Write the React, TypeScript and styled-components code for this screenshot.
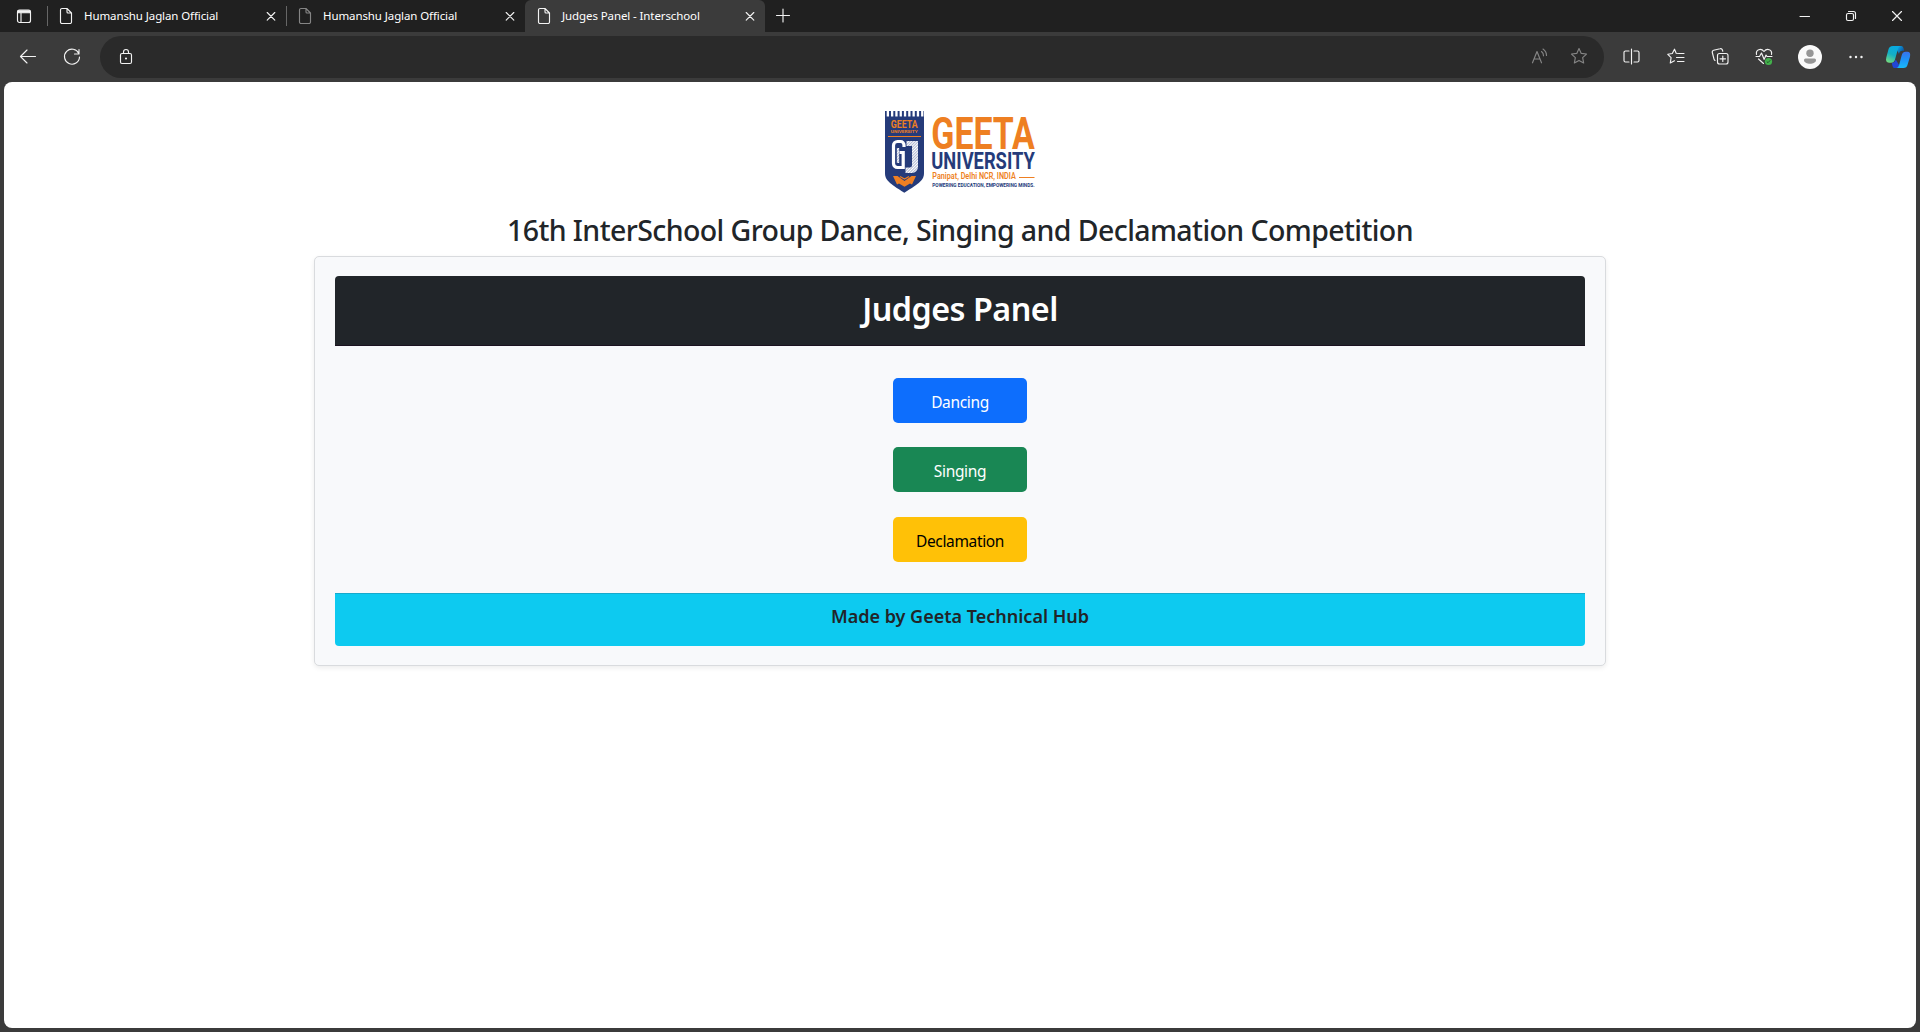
import React from "react";
import styled, { createGlobalStyle, css } from "styled-components";

const GlobalStyle = createGlobalStyle`
  *, *::before, *::after { box-sizing: border-box; }
  html, body, #root { height: 100%; margin: 0; }
  body { background: #3b3b3b; overflow: hidden; font-family: "Noto Sans", "Open Sans", sans-serif; }
`;

const Window = styled.div`
  display: flex;
  flex-direction: column;
  height: 1032px;
  width: 1920px;
  background: #3b3b3b;
`;

const Icon = styled.svg<{ $dim?: boolean; $filled?: boolean }>`
  display: block;
  flex: none;
  fill: none;
  stroke: ${(p) => (p.$filled ? "none" : p.$dim ? "#858585" : "#f2f2f2")};
  stroke-width: 1.15;
  stroke-linecap: round;
  stroke-linejoin: round;
`;

const TabStrip = styled.div`
  display: flex;
  height: 32px;
  background: #202020;
`;

const TabActions = styled.div`
  display: flex;
  align-items: center;
  width: 48px;
  padding-left: 16px;
`;

const TabItem = styled.div<{ $active?: boolean; $divided?: boolean; $width: number }>`
  display: flex;
  align-items: center;
  position: relative;
  width: ${(p) => p.$width}px;
  padding: 0 ${(p) => (p.$width === 239 ? 11 : 10)}px 0 11px;
  ${(p) =>
    p.$active &&
    css`
      padding-left: 12px;
      background: #3b3b3b;
      border-radius: 6px 6px 0 0;
    `}
  ${(p) =>
    p.$divided &&
    css`
      &::before {
        content: "";
        position: absolute;
        left: -1px;
        top: 6px;
        width: 1px;
        height: 20px;
        background: #666;
      }
    `}
`;

const TabTitle = styled.span`
  flex: 1;
  margin-left: 11px;
  color: #fff;
  font-size: 11.5px;
  line-height: 16px;
  letter-spacing: -0.1px;
  white-space: nowrap;
`;

const NewTab = styled.div`
  display: flex;
  align-items: center;
  padding-left: 10px;
`;

const WindowControls = styled.div`
  display: flex;
  align-items: center;
  margin-left: auto;
  gap: 30px;
  padding-right: 15px;
`;

const Toolbar = styled.div`
  display: flex;
  align-items: center;
  height: 50px;
  padding: 0 9px 0 18px;
`;

const NavButtons = styled.div`
  display: flex;
  gap: 24px;
  width: 82px;
`;

const AddressBar = styled.div`
  display: flex;
  align-items: center;
  width: 1504px;
  height: 42px;
  padding: 0 15px 0 16px;
  border-radius: 21px;
  background: #2a2a2a;
`;

const AddressActions = styled.div`
  display: flex;
  gap: 20px;
  margin-left: auto;
`;

const ToolIcons = styled.div`
  display: flex;
  align-items: center;
  flex: 1;
  margin-left: 17px;
`;

const ToolSlot = styled.div<{ $gap: number }>`
  flex: none;
  margin-right: ${(p) => p.$gap}px;
`;

const Page = styled.main`
  display: flex;
  flex-direction: column;
  align-items: center;
  flex: 1;
  margin: 0 4px 4px;
  padding-top: 28px;
  background: #fff;
  border-radius: 8px;
`;

const LogoSvg = styled.svg`
  display: block;
  overflow: visible;
`;

const Heading = styled.h1`
  margin: 16px 0 6px;
  color: #212529;
  font-size: 28.5px;
  font-weight: 500;
  line-height: 40px;
  letter-spacing: -0.59px;
  white-space: nowrap;
`;

const Card = styled.section`
  width: 1292px;
  height: 410px;
  padding: 19px 20px;
  border: 1px solid #d9dbde;
  border-radius: 5px;
  background: #f8f9fb;
  box-shadow: 0 2px 5px rgba(0, 0, 0, 0.075);
`;

const CardHeader = styled.header`
  height: 70px;
  padding-top: 10px;
  border-bottom: 1px solid #1b1220;
  border-radius: 4px 4px 0 0;
  background: #212529;
`;

const PanelTitle = styled.h2`
  margin: 0;
  color: #fff;
  font-size: 32.3px;
  font-weight: 600;
  line-height: 44px;
  letter-spacing: -0.5px;
  text-align: center;
`;

const CardBody = styled.div`
  display: grid;
  grid-template-rows: 45px 45px 45px;
  row-gap: 24.4px;
  justify-content: center;
  height: 247px;
  padding-top: 32px;
`;

const CategoryButton = styled.button<{ $bg: string; $color: string }>`
  width: 134px;
  height: 45px;
  padding: 3px 0 0;
  border: 0;
  border-radius: 5px;
  background: ${(p) => p.$bg};
  color: ${(p) => p.$color};
  font-family: inherit;
  font-size: 15.5px;
  line-height: 24px;
  letter-spacing: -0.35px;
`;

const CardFooter = styled.footer`
  height: 53px;
  padding-top: 9px;
  border-top: 1px solid #17a9cc;
  border-radius: 0 0 4px 4px;
  background: #0dcaf0;
  color: #212529;
  font-size: 18px;
  font-weight: 600;
  line-height: 26px;
  text-align: center;
`;

const FileIcon = ({ dim }: { dim?: boolean }) => (
  <Icon width="14" height="18" viewBox="0 0 14 18" $dim={dim}>
    <path d="M3 1.500h5l4.500 4.500v9a1.500 1.500 0 0 1-1.500 1.500H3A1.500 1.500 0 0 1 1.500 15V3A1.500 1.500 0 0 1 3 1.500zM8 1.500V5a1 1 0 0 0 1 1h3.500" />
  </Icon>
);

const CloseIcon = () => (
  <Icon width="10" height="10" viewBox="0 0 10 10">
    <path d="M1.200 1.500l7.600 7.600M8.800 1.500L1.200 9.100" />
  </Icon>
);

type TabProps = { title: string; width: number; active?: boolean; dim?: boolean; divided?: boolean };

const Tab = ({ title, width, active, dim, divided }: TabProps) => (
  <TabItem $active={active} $divided={divided} $width={width}>
    <FileIcon dim={dim} />
    <TabTitle>{title}</TabTitle>
    <CloseIcon />
  </TabItem>
);

const STAR = "M9 1.500l2.250 4.900 5.250.650-3.850 3.650 1 5.300L9 13.400 4.350 16l1-5.300L1.500 7.050l5.250-.650z";

const CopilotIcon = () => (
  <Icon width="26" height="24" viewBox="0 0 26 24" $filled>
    <defs>
      <linearGradient id="cpTop" x1="0" y1="0" x2="1" y2="0.6">
        <stop offset="0.3" stopColor="#0d9fe0" />
        <stop offset="1" stopColor="#0a4f9c" />
      </linearGradient>
      <linearGradient id="cpLeft" x1="0.6" y1="0" x2="0.2" y2="1">
        <stop offset="0" stopColor="#08a9e2" />
        <stop offset="0.5" stopColor="#14b0c4" />
        <stop offset="1" stopColor="#74dc80" />
      </linearGradient>
      <linearGradient id="cpRight" x1="0" y1="0" x2="0" y2="1">
        <stop offset="0" stopColor="#3a72ea" />
        <stop offset="0.45" stopColor="#1e90f8" />
        <stop offset="1" stopColor="#19baf8" />
      </linearGradient>
    </defs>
    <path d="M10 1h6c2 0 2.600 1.500 3.200 4.800h-2c-1.800 0-2.600 1-3.200 3.200z" fill="url(#cpTop)" />
    <path d="M16 23h-6c-2 0-2.600-1.500-3.200-5.300 2.200 0 3.200-.8 3.900-3.200z" fill="#2246d6" />
    <path d="M8 1h7.500c-1.800.5-2.300 2-3 4.500l-2.200 8c-.8 3-1.800 4.200-4.300 4.200H4C1.300 17.700.5 15.800 1.300 12.500L3.300 5C4.100 2 5.300 1 8 1z" fill="url(#cpLeft)" />
    <path d="M18.300 23h-6.800c1.800-.5 2.300-2 3-4.500l2-7.500c.8-3 1.800-4.200 4.300-4.200h1.400c2.700 0 3.500 1.900 2.700 5.200L22.800 19c-.8 3-2 4-4.500 4z" fill="url(#cpRight)" />
  </Icon>
);

const UniversityLogo = () => (
  <LogoSvg width="152" height="84" viewBox="0 0 152 84">
    <defs>
      <pattern id="hatch" width="2" height="2" patternUnits="userSpaceOnUse" patternTransform="rotate(45)">
        <rect width="2" height="2" fill="#fff" />
        <rect width="0.7" height="2" fill="#8c98bd" />
      </pattern>
    </defs>
    <path
      d="M1 1h1.700v5.500h2.300V1h2v5.500h2.300V1h2v5.500h2.300V1h2v5.500h2.300V1h2v5.500h2.300V1h2v5.500h2.300V1h2v5.500h2.300V1h2v5.500h2.300V1h2v5.500h2.300V1H40v62c0 7-4 10-19.700 19.700C5 73 1 70 1 63z"
      fill="#253b7a"
    />
    <g fontFamily="Roboto, sans-serif" fontWeight="700" fill="#ee7f22">
      <text x="6.800" y="18.300" fontSize="10.700" textLength="26.800" lengthAdjust="spacingAndGlyphs">GEETA</text>
      <text x="6.800" y="22.600" fontSize="4.200" textLength="26.800" lengthAdjust="spacingAndGlyphs">UNIVERSITY</text>
    </g>
    <path d="M4 26.500h33" stroke="#ee7f22" strokeWidth="1" />
    <path d="M20 37V35a3.500 3.500 0 0 0-3.500-3.500H13.500A4 4 0 0 0 9.500 35.500v18a4 4 0 0 0 4 4h5.700V42.500h-3.700" fill="none" stroke="#fff" strokeWidth="3.200" />
    <path d="M22.500 31H34v26a6 6 0 0 1-6 6H21.500v-5.500h4a2.500 2.500 0 0 0 2.500-2.500V36h-5.500z" fill="url(#hatch)" />
    <path d="M14 38v15" stroke="url(#hatch)" strokeWidth="2.400" />
    <path d="M9 66h4.500l7 5 7-5H32L28 74.500l-2-1-5.500 3.300-5.500-3.300-2 1z" fill="#ee7f22" />
    <path d="M16 66.500l4.500 2.500 4.500-2.500" fill="none" stroke="#ee7f22" strokeWidth="1.300" />
    <g fontFamily="Roboto, sans-serif">
      <text x="47.300" y="38.500" fontSize="43.800" fontWeight="700" fill="#ee7f22" textLength="103.500" lengthAdjust="spacingAndGlyphs">GEETA</text>
      <text x="47.300" y="58.700" fontSize="23" fontWeight="700" fill="#253b7a" textLength="103.500" lengthAdjust="spacingAndGlyphs">UNIVERSITY</text>
      <text x="48.300" y="69.200" fontSize="8.600" fontWeight="600" fill="#ee7f22" textLength="83.500" lengthAdjust="spacingAndGlyphs">Panipat, Delhi NCR, INDIA</text>
      <text x="48.300" y="76.500" fontSize="5" fontWeight="700" fill="#253b7a" textLength="102.300" lengthAdjust="spacingAndGlyphs">POWERING EDUCATION, EMPOWERING MINDS.</text>
    </g>
    <path d="M135 67.500H150.500" stroke="#ee7f22" strokeWidth="1" />
  </LogoSvg>
);

const categories = [
  { label: "Dancing", bg: "#0d6efd", color: "#fff" },
  { label: "Singing", bg: "#198754", color: "#fff" },
  { label: "Declamation", bg: "#ffc107", color: "#000" },
];

export default function App() {
  return (
    <Window>
      <GlobalStyle />
      <TabStrip>
        <TabActions>
          <Icon width="16" height="16" viewBox="0 0 16 16">
            <rect x="1.500" y="2" width="13" height="12.500" rx="2" />
            <path d="M2 2.800h12v1.900H2z" fill="#f2f2f2" />
            <path d="M5 5v9.500" />
          </Icon>
        </TabActions>
        <Tab title="Humanshu Jaglan Official" width={239} divided />
        <Tab title="Humanshu Jaglan Official" width={238} dim divided />
        <Tab title="Judges Panel - Interschool" width={240} active />
        <NewTab>
          <Icon width="16" height="16" viewBox="0 0 16 16">
            <path d="M1.500 7.500h13M8 1v13" />
          </Icon>
        </NewTab>
        <WindowControls>
          <Icon width="16" height="16" viewBox="0 0 16 16">
            <path d="M3 8.500h9.500" />
          </Icon>
          <Icon width="16" height="16" viewBox="0 0 16 16">
            <rect x="3.500" y="5.500" width="7" height="7" rx="1.500" />
            <path d="M5.500 3.500h5a2 2 0 0 1 2 2v5" />
          </Icon>
          <Icon width="16" height="16" viewBox="0 0 16 16">
            <path d="M3.500 3.500l9 9M12.500 3.500l-9 9" />
          </Icon>
        </WindowControls>
      </TabStrip>

      <Toolbar>
        <NavButtons>
          <Icon width="20" height="20" viewBox="0 0 20 20">
            <path d="M17.500 9.500H2.500M9 3L2.500 9.500 9 16" />
          </Icon>
          <Icon width="20" height="20" viewBox="0 0 20 20">
            <path d="M16.800 6.500A7.500 7.500 0 1 0 17.500 10M17 2.500v4.500h-4.500" />
          </Icon>
        </NavButtons>
        <AddressBar>
          <Icon width="20" height="20" viewBox="0 0 20 20">
            <rect x="4.500" y="6.500" width="11" height="10" rx="1.500" />
            <path d="M7.500 6.500V5a2.500 2.500 0 0 1 5 0v1.500" />
            <circle cx="10" cy="11.500" r="0.500" fill="#f2f2f2" />
          </Icon>
          <AddressActions>
            <Icon width="20" height="20" viewBox="0 0 20 20" $dim>
              <path d="M3.500 15.800L8 4.500l4.500 11.300M5 12h6M12.500 4.500a5 5 0 0 1 2 4.300M14 2a8 8 0 0 1 3.500 6.500" />
            </Icon>
            <Icon width="20" height="20" viewBox="-1 0 20 20" $dim>
              <path d={STAR} />
            </Icon>
          </AddressActions>
        </AddressBar>
        <ToolIcons>
          <ToolSlot $gap={25}>
            <Icon width="20" height="20" viewBox="0 0 20 20">
              <path d="M8 4H4.500A1.500 1.500 0 0 0 3 5.500v8A1.500 1.500 0 0 0 4.500 15H8M13 4h3.500A1.500 1.500 0 0 1 18 5.500v8a1.500 1.500 0 0 1-1.500 1.500H13M10.500 2v15" />
            </Icon>
          </ToolSlot>
          <ToolSlot $gap={24}>
            <Icon width="20" height="20" viewBox="0 0 20 20">
              <path d="M11.500 6.500l-1.300-.2L8.500 2.200 6.300 6.500l-4.500.8 3.300 3.400-.8 5.300 4.200-2.200M12.500 6.500H18M10.500 10.500H18M11.500 14.500H18" />
            </Icon>
          </ToolSlot>
          <ToolSlot $gap={24}>
            <Icon width="20" height="20" viewBox="0 0 20 20">
              <rect x="7.500" y="6.500" width="10.500" height="10.500" rx="2" />
              <path d="M12.800 9v5.500M10 11.800h5.500M5 13.500a2 2 0 0 1-1-1.300L2.300 5.500a1.800 1.800 0 0 1 1.300-2.200l6.500-1.500A1.900 1.900 0 0 1 12.400 3l.4 1.200" />
            </Icon>
          </ToolSlot>
          <ToolSlot $gap={24}>
            <Icon width="20" height="20" viewBox="0 0 20 20">
              <path d="M2.500 7.500C1.500 2.500 7 .8 10 4.500c3-3.700 8.500-2 7.500 3M2 9.500h3.500l2-3.500 2.700 6.500 1.800-4.500 1 1.500h5M4.500 12l5 4.500" />
              <circle cx="14.500" cy="14.500" r="4.200" fill="#3b3b3b" stroke="none" />
              <circle cx="14.500" cy="14.500" r="3.600" fill="#43b14c" stroke="none" />
              <path d="M13 14.700l1 1 2-2.200" stroke="#204d25" strokeWidth="0.900" />
            </Icon>
          </ToolSlot>
          <ToolSlot $gap={24}>
            <Icon width="24" height="24" viewBox="0 0 24 24" $filled>
              <circle cx="12" cy="12" r="12" fill="#fafafa" />
              <circle cx="12" cy="8.300" r="3.700" fill="#969696" />
              <path d="M7.500 13.500h9a1.500 1.500 0 0 1 1.500 1.500c0 2.500-3 3.700-6 3.700S6 17.500 6 15a1.500 1.500 0 0 1 1.500-1.500z" fill="#969696" />
            </Icon>
          </ToolSlot>
          <ToolSlot $gap={19}>
            <Icon width="20" height="20" viewBox="0 0 20 20">
              <path d="M4.500 10h.01M10 10h.01M15.500 10h.01" strokeWidth="2.400" style={{ strokeWidth: 2.4 }} />
            </Icon>
          </ToolSlot>
          <CopilotIcon />
        </ToolIcons>
      </Toolbar>

      <Page>
        <UniversityLogo />
        <Heading>16th InterSchool Group Dance, Singing and Declamation Competition</Heading>
        <Card>
          <CardHeader>
            <PanelTitle>Judges Panel</PanelTitle>
          </CardHeader>
          <CardBody>
            {categories.map((c) => (
              <CategoryButton key={c.label} $bg={c.bg} $color={c.color}>
                {c.label}
              </CategoryButton>
            ))}
          </CardBody>
          <CardFooter>Made by Geeta Technical Hub</CardFooter>
        </Card>
      </Page>
    </Window>
  );
}
